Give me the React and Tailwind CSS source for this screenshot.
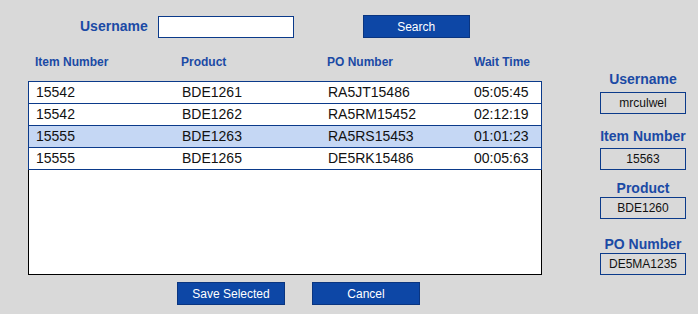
import React from "react"

const rows = [
  { item: "15542", product: "BDE1261", po: "RA5JT15486", wait: "05:05:45" },
  { item: "15542", product: "BDE1262", po: "RA5RM15452", wait: "02:12:19" },
  { item: "15555", product: "BDE1263", po: "RA5RS15453", wait: "01:01:23", selected: true },
  { item: "15555", product: "BDE1265", po: "DE5RK15486", wait: "00:05:63" },
]

const details = [
  { label: "Username", value: "mrculwel", labelTop: "mt-[71px]", boxTop: "mt-[5px]" },
  { label: "Item Number", value: "15563", labelTop: "mt-[14px]", boxTop: "mt-[4px]" },
  { label: "Product", value: "BDE1260", labelTop: "mt-[10px]", boxTop: "mt-[1px]" },
  { label: "PO Number", value: "DE5MA1235", labelTop: "mt-[17px]", boxTop: "mt-[1px]" },
]

function Button({ children, className = "" }) {
  return (
    <button
      className={
        "h-[23px] bg-[#0d47a6] border border-[#0a3580] text-white text-[12px] leading-none " +
        className
      }
    >
      {children}
    </button>
  )
}

export default function App() {
  return (
    <div
      className="w-[698px] h-[314px] bg-[#d9d9d9] flex overflow-hidden"
      style={{ fontFamily: '"Liberation Sans", Arial, sans-serif' }}
    >
      <div className="ml-[28px] w-[514px] flex flex-col">
        <div className="mt-[15px] flex items-center h-[23px]">
          <span className="ml-[52px] text-[14px] font-bold text-[#1b4aa5]">Username</span>
          <input
            className="ml-[10px] w-[136px] h-[22px] bg-white border border-[#0b3a8a] outline-none"
            type="text"
          />
          <Button className="ml-[69px] w-[107px]">Search</Button>
        </div>

        <div className="mt-[17px] grid grid-cols-[146px_146px_146px_76px] text-[12px] font-bold text-[#1b4aa5] leading-[14px]">
          <span className="pl-[7px]">Item Number</span>
          <span className="pl-[7px]">Product</span>
          <span className="pl-[7px]">PO Number</span>
          <span className="pl-[8px]">Wait Time</span>
        </div>

        <div className="mt-[12px] h-[194px] bg-white border border-black">
          {rows.map((r, i) => (
            <div
              key={i}
              className={
                "-mx-px h-[22px] grid grid-cols-[146px_146px_146px_78px] items-center border-x border-b border-[#0b3a8a] text-[14px] text-[#111] " +
                (i === 0 ? "-mt-px h-[23px] border-t " : "") +
                (r.selected ? "bg-[#c5d7f4]" : "bg-white")
              }
            >
              <span className="pl-[7px]">{r.item}</span>
              <span className="pl-[7px]">{r.product}</span>
              <span className="pl-[7px]">{r.po}</span>
              <span className="pl-[7px]">{r.wait}</span>
            </div>
          ))}
        </div>

        <div className="mt-[7px] flex">
          <Button className="ml-[149px] w-[108px]">Save Selected</Button>
          <Button className="ml-[27px] w-[108px]">Cancel</Button>
        </div>
      </div>

      <div className="ml-[58px] w-[86px] flex flex-col items-center">
        {details.map((d) => (
          <React.Fragment key={d.label}>
            <div className={"h-[16px] leading-[16px] text-[14px] font-bold text-[#1b4aa5] whitespace-nowrap " + d.labelTop}>
              {d.label}
            </div>
            <div
              className={
                "w-[86px] h-[22px] border border-[#0b3a8a] flex items-center justify-center text-[12px] text-[#111] " +
                d.boxTop
              }
            >
              {d.value}
            </div>
          </React.Fragment>
        ))}
      </div>
    </div>
  )
}
